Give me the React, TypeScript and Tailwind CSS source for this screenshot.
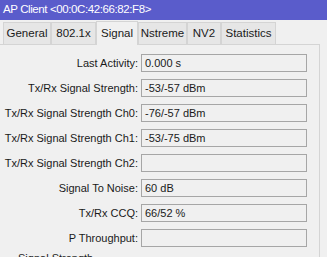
const tabs = [
  { name: 'General', w: 'w-[48px]' },
  { name: '802.1x', w: 'w-[45px]' },
  { name: 'Signal', w: 'w-[42px]', active: true },
  { name: 'Nstreme', w: 'w-[49px]' },
  { name: 'NV2', w: 'w-[34px]' },
  { name: 'Statistics', w: 'w-[55px]' },
]

const rows = [
  { label: 'Last Activity:', value: '0.000 s' },
  { label: 'Tx/Rx Signal Strength:', value: '-53/-57 dBm' },
  { label: 'Tx/Rx Signal Strength Ch0:', value: '-76/-57 dBm' },
  { label: 'Tx/Rx Signal Strength Ch1:', value: '-53/-75 dBm' },
  { label: 'Tx/Rx Signal Strength Ch2:', value: '' },
  { label: 'Signal To Noise:', value: '60 dB' },
  { label: 'Tx/Rx CCQ:', value: '66/52 %' },
  { label: 'P Throughput:', value: '' },
]

export default function App() {
  return (
    <div className="h-[257px] w-[327px] overflow-hidden whitespace-nowrap bg-[#f0f0f0] font-['Liberation_Sans',Arial,sans-serif] text-[11px] text-[#1a1a1a]">
      <div className="flex h-[20px] items-center bg-[#5a5ccb] pl-[3px] text-[11.5px] tracking-[-0.4px] text-white">
        AP Client &lt;00:0C:42:66:82:F8&gt;
      </div>

      <div className="flex h-[24px] items-end pl-[3px]">
        {tabs.map((t) =>
          t.active ? (
            <div
              key={t.name}
              className={`${t.w} relative z-10 -mb-px flex h-[24px] items-start justify-center border border-b-0 border-[#d4d4d4] bg-[#f0f0f0] pt-[3px] text-[11.5px]`}
            >
              {t.name}
            </div>
          ) : (
            <div
              key={t.name}
              className={`${t.w} flex h-[22px] items-center justify-center border border-b-0 border-[#d4d4d4] bg-[#e6e6e6] text-[11.5px]`}
            >
              {t.name}
            </div>
          )
        )}
      </div>

      <div className="mr-[7px] h-[220px] border-t border-r border-[#d4d4d4] pt-[9px]">
        <div className="flex flex-col gap-[7px]">
          {rows.map((r) => (
            <div key={r.label} className="flex items-center">
              <div className="w-[141px] pr-[3px] text-right">{r.label}</div>
              <div className="flex h-[18px] w-[166px] items-center border border-[#a6a6a6] pl-[3px]">{r.value}</div>
            </div>
          ))}
        </div>
        <div className="mt-[3px] pl-[18px]">Signal Strength</div>
      </div>
    </div>
  )
}
